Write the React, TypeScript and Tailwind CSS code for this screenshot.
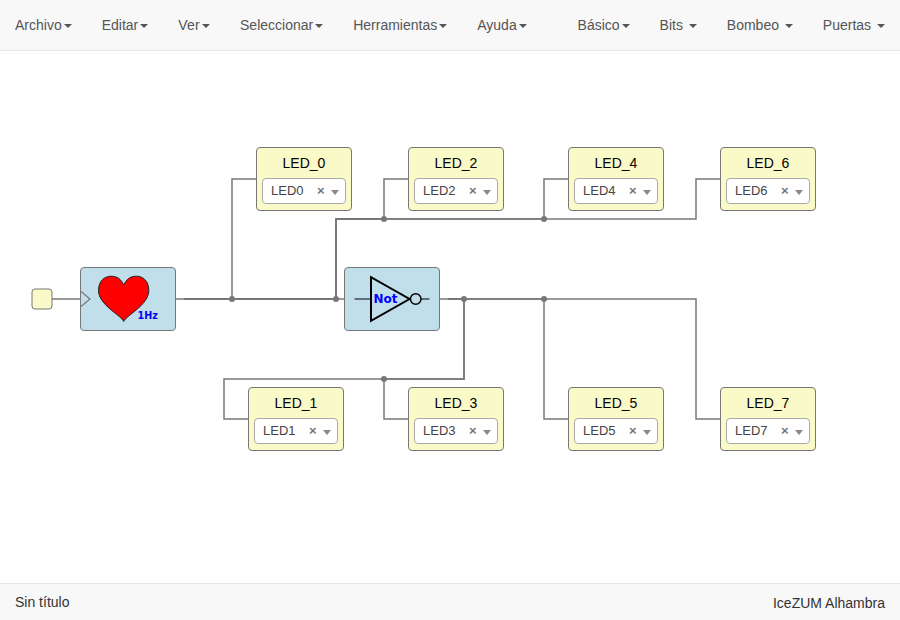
const leftMenus = ['Archivo', 'Editar', 'Ver', 'Seleccionar', 'Herramientas', 'Ayuda'];
const rightMenus = ['Básico', 'Bits', 'Bombeo', 'Puertas'];

const leds = [
  { id: 0, place: 'left-[256px] top-[96px]' },
  { id: 2, place: 'left-[408px] top-[96px]' },
  { id: 4, place: 'left-[568px] top-[96px]' },
  { id: 6, place: 'left-[720px] top-[96px]' },
  { id: 1, place: 'left-[248px] top-[336px]' },
  { id: 3, place: 'left-[408px] top-[336px]' },
  { id: 5, place: 'left-[568px] top-[336px]' },
  { id: 7, place: 'left-[720px] top-[336px]' },
];

// One path per wire; shared stretches overlap and look heavier.
const wires = [
  'M52 248H80',
  'M176 248H184',
  'M184 248H232V128H256',
  'M184 248H336V168H384V128H408',
  'M184 248H336V168H544V128H568',
  'M184 248H336V168H696V128H720',
  'M184 248H344',
  'M440 248H448',
  'M448 248H464V328H224V368H248',
  'M448 248H464V328H384V368H408',
  'M448 248H544V368H568',
  'M448 248H696V368H720',
];

const junctions = [
  [232, 248], [336, 248], [384, 168], [544, 168], [464, 248], [544, 248], [384, 328],
];

function Caret() {
  return <span className="ml-[2px] inline-block border-x-4 border-t-4 border-x-transparent border-t-[#555] align-middle" />;
}

function Menu({ label, spaced = false }: { label: string; spaced?: boolean }) {
  return (
    <li className="px-[15px] py-[15px] leading-5 whitespace-nowrap text-[#555]">
      <span className={label === 'Ver' ? 'tracking-[0.25px]' : ''}>{label}</span>
      {spaced ? ' ' : ''}
      <Caret />
    </li>
  );
}

function Led({ id, place }: { id: number; place: string }) {
  return (
    <div className={`absolute h-16 w-24 rounded-[4px] border border-[#777] bg-[#fafac8] px-[5px] ${place}`}>
      <div className="pt-[5px] text-center leading-5 text-black">LED_{id}</div>
      <div className="mt-[5px] flex h-[26px] items-center rounded-[4px] border border-[#aaa] bg-white pl-2 text-[13px] text-[#444]">
        <span className="w-[46px] leading-6">LED{id}</span>
        <span className="w-[14px] text-[13px] leading-6 font-bold text-[#777]">×</span>
        <span className="mt-[2px] border-x-4 border-t-[5px] border-x-transparent border-t-[#888]" />
      </div>
    </div>
  );
}

export default function App() {
  return (
    <div className="flex h-[620px] w-[900px] flex-col overflow-hidden bg-white font-['Liberation_Sans',Arial,sans-serif] text-sm text-[#333]">
      <nav className="flex h-[51px] shrink-0 justify-between border-b border-[#e7e7e7] bg-[#f8f8f8]">
        <ul className="flex">
          {leftMenus.map((m) => <Menu key={m} label={m} />)}
        </ul>
        <ul className="flex">
          {rightMenus.map((m, i) => <Menu key={m} label={m} spaced={i > 0} />)}
        </ul>
      </nav>

      <main className="relative flex-1">
        <svg className="absolute inset-0" width="900" height="532" fill="none">
          {wires.map((d) => <path key={d} d={d} stroke="#777" strokeWidth="1.5" />)}
          {junctions.map(([x, y]) => <circle key={`${x}-${y}`} cx={x} cy={y} r="3" fill="#777" />)}
          <rect x="32" y="238" width="20" height="20" rx="3" fill="#fafac8" stroke="#777" strokeWidth="1" />
        </svg>

        <div className="absolute top-[216px] left-[80px] h-16 w-24 rounded-[4px] border border-[#777] bg-[#c0dfeb]">
          <svg className="absolute -top-px -left-px" width="96" height="64" fill="none">
            <path d="M1 24.5L10 32L1 39.5" stroke="#777" strokeWidth="1.2" />
            <path d="M43.7 54.5C41 48 18.5 38 18.5 23.5C18.5 14 24.5 9.2 31 9.2C37.5 9.2 41.5 12.5 43.7 18.2C46 12.5 50 9.2 56.5 9.2C63 9.2 68.8 14 68.8 23.5C68.8 38 46.5 48 43.7 54.5Z" fill="red" stroke="#222" strokeWidth="1" />
            <text x="57.5" y="52" textLength="20.3" lengthAdjust="spacingAndGlyphs" fill="blue" className="font-['DejaVu_Sans',sans-serif] text-[10.5px] font-bold">1Hz</text>
          </svg>
        </div>

        <div className="absolute top-[216px] left-[344px] h-16 w-24 rounded-[4px] border border-[#777] bg-[#c0dfeb]">
          <svg className="absolute -top-px -left-px" width="96" height="64" fill="none" stroke="black">
            <path d="M10.5 32H27M77 32H85.5" strokeWidth="1.2" />
            <path d="M27 10.2V53.8L65.5 32Z" strokeWidth="2" />
            <circle cx="71.7" cy="32" r="5.3" strokeWidth="1.5" />
            <text x="29.5" y="36" fill="blue" stroke="none" className="font-['DejaVu_Sans',sans-serif] text-[12px] font-bold">Not</text>
          </svg>
        </div>

        {leds.map((led) => <Led key={led.id} {...led} />)}
      </main>

      <footer className="flex h-[37px] shrink-0 justify-between border-t border-[#e7e7e7] bg-[#f8f8f8] px-[15px] leading-5">
        <span className="pt-2">Sin título</span>
        <span className="pt-[9px]">IceZUM Alhambra</span>
      </footer>
    </div>
  );
}
